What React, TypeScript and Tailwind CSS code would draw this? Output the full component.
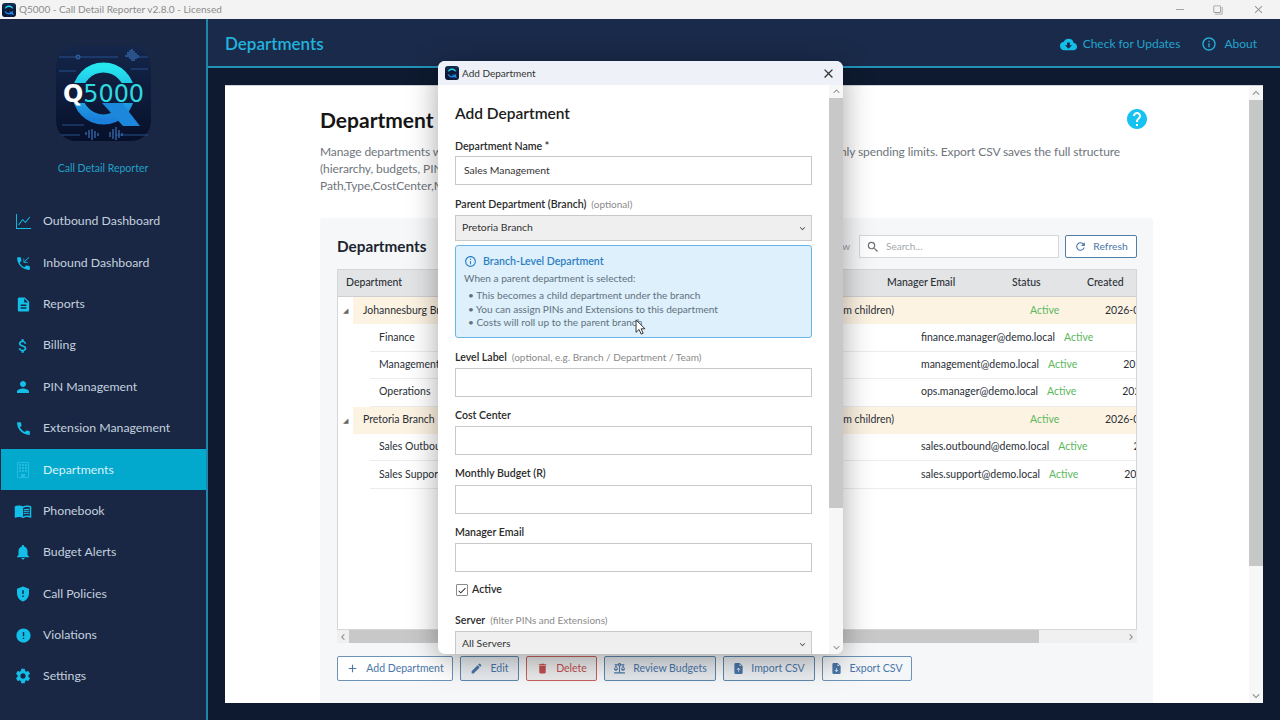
import { ReactNode } from "react";
import {
  MdAdd,
  MdAttachMoney,
  MdBalance,
  MdCall,
  MdClose,
  MdCloudDownload,
  MdDelete,
  MdDescription,
  MdEdit,
  MdError,
  MdExpandLess,
  MdExpandMore,
  MdFilterNone,
  MdGppMaybe,
  MdHelp,
  MdInfoOutline,
  MdChevronLeft,
  MdChevronRight,
  MdMenuBook,
  MdNotifications,
  MdPerson,
  MdPhoneCallback,
  MdRefresh,
  MdSearch,
  MdSettings,
  MdCheck,
} from "react-icons/md";
import { BsBuilding, BsFileEarmarkArrowDownFill, BsFileEarmarkArrowUpFill, BsGraphUp } from "react-icons/bs";

const navItems = [
  { label: "Outbound Dashboard", icon: <BsGraphUp size={15} /> },
  { label: "Inbound Dashboard", icon: <MdPhoneCallback size={17} /> },
  { label: "Reports", icon: <MdDescription size={17} /> },
  { label: "Billing", icon: <MdAttachMoney size={18} /> },
  { label: "PIN Management", icon: <MdPerson size={18} /> },
  { label: "Extension Management", icon: <MdCall size={17} /> },
  { label: "Departments", icon: <BsBuilding size={16} />, active: true },
  { label: "Phonebook", icon: <MdMenuBook size={18} /> },
  { label: "Budget Alerts", icon: <MdNotifications size={18} /> },
  { label: "Call Policies", icon: <MdGppMaybe size={18} /> },
  { label: "Violations", icon: <MdError size={17} /> },
  { label: "Settings", icon: <MdSettings size={18} /> },
];

const rows = [
  { name: "Johannesburg Branch", branch: true },
  { name: "Finance", email: "finance.manager@demo.local", date: "2026-02-11" },
  { name: "Management", email: "management@demo.local", date: "2026-02-11" },
  { name: "Operations", email: "ops.manager@demo.local", date: "2026-02-11" },
  { name: "Pretoria Branch", branch: true },
  { name: "Sales Outbound", email: "sales.outbound@demo.local", date: "2026-02-11" },
  { name: "Sales Support", email: "sales.support@demo.local", date: "2026-02-11" },
];

const Logo = ({ small = false }: { small?: boolean }) => (
  <svg viewBox="0 0 95 95" className={small ? "h-[14px] w-[14px]" : "h-[95px] w-[95px]"}>
    <defs>
      <linearGradient id={small ? "ringS" : "ring"} x1="0" y1="0" x2="0" y2="1">
        <stop offset="0" stopColor="#25e6ee" />
        <stop offset="1" stopColor="#1b7fdc" />
      </linearGradient>
      <linearGradient id={small ? "tileS" : "tile"} x1="0" y1="0" x2="0" y2="1">
        <stop offset="0" stopColor="#14264a" />
        <stop offset="1" stopColor="#07102a" />
      </linearGradient>
    </defs>
    <rect width="95" height="95" rx="20" fill={`url(#${small ? "tileS" : "tile"})`} />
    <g stroke="#24508c" strokeWidth="1" fill="none">
      <path d="M3 11H62M82 11H92M3 25H20M75 23H92M6 79H28M5 89H24M60 89H92" />
      <path d="M70 11V9M72 11V6M74 13V4M76 15V3M78 15V5M80 13V7M82 12V9" stroke="#3a72b8" strokeWidth="1.2" />
      <path d="M30 89V86M33 92V84M36 94V83M39 92V85M42 90V87M54 91V86M57 93V83M60 94V81M63 92V84M66 90V87" stroke="#3a72b8" strokeWidth="1.2" />
    </g>
    <circle cx="22" cy="11" r="2" fill="none" stroke="#3a72b8" />
    <circle cx="47.5" cy="47.5" r="26" fill="none" stroke={`url(#${small ? "ringS" : "ring"})`} strokeWidth="10" />
    <path d="M46 57H66L84 80H67Z" fill="#1b88dc" />
    <rect x="3" y="37" width="89" height="20" fill="#0e1b3a" />
    {!small && (
      <text x="7" y="55.5" textLength="81" lengthAdjust="spacingAndGlyphs" fontFamily="'DejaVu Sans', sans-serif" fontSize="24" fontWeight="700">
        <tspan fill="#ffffff">Q</tspan>
        <tspan fill="#2fd9e0" fontWeight="400">5000</tspan>
      </text>
    )}
  </svg>
);

const FieldLabel = ({ label, hint }: { label: string; hint?: string }) => (
  <div className="flex h-[16px] items-center text-[10.6px] leading-none">
    <span className="font-semibold text-[#2a2a2a]">{label}</span>
    {hint && <span className="ml-[5px] text-[10px] text-[#8a8a8a]">{hint}</span>}
  </div>
);

const Field = ({ label, hint, className }: { label: string; hint?: string; className: string }) => (
  <div className={className}>
    <FieldLabel label={label} hint={hint} />
    <div className="mt-[3px] h-[29px] border border-[#c9c9c9] bg-white" />
  </div>
);

const ActionButton = ({ icon, children, className }: { icon: ReactNode; children: ReactNode; className: string }) => (
  <button className={`flex h-[25px] shrink-0 items-center justify-center gap-[7px] rounded-[2px] border text-[10.5px] ${className}`}>
    {icon}
    {children}
  </button>
);

export default function App() {
  return (
    <div className="relative flex h-[720px] w-[1280px] flex-col overflow-hidden bg-[#0d1a2f] font-['Lato',sans-serif]">
      {/* window title bar */}
      <div className="flex h-[19px] items-center justify-between bg-[#f3f3f3] pl-[2px]">
        <div className="flex items-center gap-[3px] text-[10px] text-[#8c8c8c]">
          <Logo small />
          <span>Q5000 - Call Detail Reporter v2.8.0 - Licensed</span>
        </div>
        <div className="flex items-center gap-[29px] pr-[15px] text-[#9a9a9a]">
          <div className="h-px w-[8px] bg-[#a5a5a5]" />
          <MdFilterNone size={10} className="-scale-x-100" />
          <MdClose size={13} />
        </div>
      </div>

      <div className="flex min-h-0 flex-1">
        {/* sidebar */}
        <aside className="flex w-[208px] shrink-0 flex-col border-r-2 border-[#1f86ad] bg-[#1a2744]">
          <div className="mt-[27px] flex justify-center">
            <Logo />
          </div>
          <div className="mt-[20px] text-center text-[10.5px] leading-[14px] text-[#22a0c6]">Call Detail Reporter</div>
          <nav className="mt-[26px] flex flex-col pl-px">
            {navItems.map((item) => (
              <div
                key={item.label}
                className={
                  item.active
                    ? "flex h-[41.35px] items-center bg-[#03a8cd] text-[#d9f3fa]"
                    : "flex h-[41.35px] items-center text-[#c3d1df]"
                }
              >
                <span className={item.active ? "flex w-[42px] justify-center pl-[2px] text-[#25bddf]" : "flex w-[42px] justify-center pl-[2px] text-[#12bfe8]"}>
                  {item.icon}
                </span>
                <span className="text-[12.3px]">{item.label}</span>
              </div>
            ))}
          </nav>
        </aside>

        <main className="flex min-w-0 flex-1 flex-col">
          {/* header */}
          <header className="flex h-[49px] shrink-0 items-center justify-between border-b-2 border-[#2391b8] bg-[#1a2a4a] pl-[17px] pr-[23px] pt-[3px]">
            <h1 className="text-[17px] font-semibold text-[#22b3dd]">Departments</h1>
            <div className="flex items-center text-[12px] text-[#22a5cd]">
              <MdCloudDownload size={17} className="text-[#12bfe8]" />
              <span className="ml-[6px]">Check for Updates</span>
              <MdInfoOutline size={16} className="ml-[21px] text-[#22b3dd]" />
              <span className="ml-[7px]">About</span>
            </div>
          </header>

          {/* page */}
          <div className="flex min-h-0 flex-1 p-[17px]">
            <div className="flex min-w-0 flex-1 border-t border-[#cfd4da] bg-white">
              <div className="min-w-0 flex-1 overflow-hidden pl-[95px] pr-[96px] pt-[21px]">
                <div className="flex items-center justify-between pr-[4px]">
                  <h2 className="whitespace-nowrap text-[21px] font-bold leading-[26px] text-[#151515]">Department Management</h2>
                  <MdHelp size={24} className="mb-[2px] text-[#15c2f1]" />
                </div>
                <div className="mt-[10px] w-[800px] text-[12px] leading-[17px] tracking-[-0.1px] text-[#6f757c]">
                  <div className="flex justify-between whitespace-nowrap">
                    <span>Manage departments with branches and budgets.</span>
                    <span>Assign monthly spending limits. Export CSV saves the full structure</span>
                  </div>
                  <div className="whitespace-nowrap">(hierarchy, budgets, PINs and Extensions)</div>
                  <div className="whitespace-nowrap">Path,Type,CostCenter,ManagerEmail</div>
                </div>

                {/* departments card */}
                <section className="mt-[24px] h-[600px] rounded-[3px] bg-[#f6f7f8] px-[17px] pt-[17px]">
                  <div className="flex h-[23px] items-center">
                    <h3 className="text-[15.3px] font-bold text-[#1b2430]">Departments</h3>
                    <span className="ml-auto text-[10px] text-[#9a9a9a]">Tree view</span>
                    <div className="ml-[9px] flex h-[23px] w-[200px] items-center border border-[#d5d8db] bg-white pl-[6px] text-[10px] text-[#a4a8ac]">
                      <MdSearch size={14} className="text-[#6c7177]" />
                      <span className="ml-[6px]">Search...</span>
                    </div>
                    <button className="-mr-px ml-[6px] flex h-[23px] w-[72px] items-center justify-center gap-[6px] rounded-[2px] border border-[#4f7fa8] bg-white text-[10.3px] text-[#4a76a8]">
                      <MdRefresh size={13} />
                      Refresh
                    </button>
                  </div>

                  <div className="mt-[11px] h-[361px] w-[800px] overflow-hidden border border-[#d4d6d8] bg-white text-[10.5px] text-[#2a2f36]">
                    <div className="flex h-[27px] items-center whitespace-nowrap border-b border-[#cfcfcf] bg-[#e2e4e5] font-medium">
                      <span className="ml-[8px] w-[541px] shrink-0">Department</span>
                      <span className="w-[125px] shrink-0">Manager Email</span>
                      <span className="w-[75px] shrink-0">Status</span>
                      <span>Created</span>
                    </div>
                    {rows.map((row) =>
                      row.branch ? (
                        <div key={row.name} className="flex h-[27.4px] items-center whitespace-nowrap">
                          <span className="ml-[5px] w-[10px] shrink-0 text-[7px] text-[#666]">◢</span>
                          <div className="flex h-full flex-1 items-center bg-[#fdf3e3] pl-[10px]">
                            <span className="w-[200px] shrink-0">{row.name}</span>
                            <span className="w-[331px] shrink-0 text-right">Total (rolled up from children)</span>
                            <span className="ml-[136px] w-[75px] shrink-0 text-[#5cb85c]">Active</span>
                            <span>2026-02-11</span>
                          </div>
                        </div>
                      ) : (
                        <div key={row.name} className="ml-[32px] flex h-[27.4px] items-center whitespace-nowrap border-b border-[#ececec] pl-[9px]">
                          <span className="w-[542px] shrink-0">{row.name}</span>
                          <span>{row.email}</span>
                          <span className="ml-[9px] text-[#5cb85c]">Active</span>
                          <span className="ml-[46px]">{row.date}</span>
                        </div>
                      ),
                    )}
                  </div>

                  {/* horizontal scrollbar */}
                  <div className="flex h-[13px] w-[800px] items-center justify-between bg-[#f0f0f0] text-[#8a8a8a]">
                    <MdChevronLeft size={12} />
                    <div className="mr-auto h-full w-[690px] bg-[#c8c8c8]" />
                    <MdChevronRight size={12} />
                  </div>

                  <div className="mt-[13px] flex gap-[7px] text-[#4a76a8]">
                    <ActionButton icon={<MdAdd size={13} />} className="w-[116px] border-[#6b93b8] bg-white">Add Department</ActionButton>
                    <ActionButton icon={<MdEdit size={13} />} className="w-[59px] border-[#5f87ad] bg-[#e9edf1]">Edit</ActionButton>
                    <ActionButton icon={<MdDelete size={13} />} className="w-[71px] border-[#c9605f] bg-[#ececec] text-[#c0504f]">Delete</ActionButton>
                    <ActionButton icon={<MdBalance size={13} />} className="w-[112px] border-[#5f87ad] bg-[#e6eaee]">Review Budgets</ActionButton>
                    <ActionButton icon={<BsFileEarmarkArrowUpFill size={11} />} className="w-[92px] border-[#5f87ad] bg-[#eceff2]">Import CSV</ActionButton>
                    <ActionButton icon={<BsFileEarmarkArrowDownFill size={11} />} className="w-[90px] border-[#6b93b8] bg-[#f4f6f8]">Export CSV</ActionButton>
                  </div>
                </section>
              </div>

              {/* page scrollbar */}
              <div className="flex w-[14px] shrink-0 flex-col items-center bg-[#f7f7f7] text-[#8f8f8f]">
                <MdExpandLess size={14} />
                <div className="h-[466px] w-full bg-[#c6c7c7]" />
                <div className="flex-1" />
                <MdExpandMore size={14} />
              </div>
            </div>
          </div>
        </main>
      </div>

      {/* modal dialog */}
      <div className="absolute left-[438px] top-[61px] flex h-[593px] w-[405px] flex-col overflow-hidden rounded-[7px] bg-white shadow-[0_6px_30px_rgba(0,0,0,0.35)]">
        <div className="flex h-[24px] shrink-0 items-center justify-between bg-[#eef2f8] pl-[7px] pr-[7px]">
          <div className="flex items-center gap-[3px] text-[10px] text-[#333]">
            <Logo small />
            <span>Add Department</span>
          </div>
          <MdClose size={15} className="text-[#333]" />
        </div>
        <div className="flex min-h-0 flex-1">
          <div className="min-w-0 flex-1 overflow-hidden pl-[17px] pr-[17px]">
            <h2 className="mt-[17px] text-[15.5px] font-semibold leading-[22px] text-[#1c1c1c]">Add Department</h2>
            <div className="mt-[14px]">
              <FieldLabel label="Department Name *" />
              <div className="mt-[2px] flex h-[29px] items-center border border-[#c9c9c9] bg-white pl-[8px] text-[10.4px] text-[#333]">Sales Management</div>
            </div>
            <div className="mt-[11px]">
              <FieldLabel label="Parent Department (Branch)" hint="(optional)" />
              <div className="mt-[3px] flex h-[26px] items-center justify-between border border-[#c9c9c9] bg-[#efefef] pl-[6px] pr-[3px] text-[10.4px] text-[#333]">
                Pretoria Branch
                <MdExpandMore size={11} className="text-[#555]" />
              </div>
            </div>
            <div className="mt-[4px] h-[93px] rounded-[3px] border border-[#67b6e6] bg-[#ddf0fc] pl-[8px] pt-[9px] text-[10.1px] leading-[13.5px] text-[#62707c]">
              <div className="flex items-center gap-[6px] font-semibold text-[#2f7fc4]">
                <MdInfoOutline size={13} />
                <span className="text-[10.6px]">Branch-Level Department</span>
              </div>
              <div className="mt-[3px]">When a parent department is selected:</div>
              <ul className="mt-[4px] pl-[4px]">
                <li>• This becomes a child department under the branch</li>
                <li>• You can assign PINs and Extensions to this department</li>
                <li>• Costs will roll up to the parent branch</li>
              </ul>
            </div>
            <Field className="mt-[11px]" label="Level Label" hint="(optional, e.g. Branch / Department / Team)" />
            <Field className="mt-[10.4px]" label="Cost Center" />
            <Field className="mt-[10.4px]" label="Monthly Budget (R)" />
            <Field className="mt-[10.4px]" label="Manager Email" />
            <div className="mt-[11px] flex h-[14px] items-center gap-[4px] pl-px text-[10.6px] font-semibold text-[#2a2a2a]">
              <span className="flex h-[12px] w-[12px] items-center justify-center rounded-[1px] border border-[#8a8a8a] bg-white text-[#222]">
                <MdCheck size={11} />
              </span>
              Active
            </div>
            <div className="mt-[15px]">
              <FieldLabel label="Server" hint="(filter PINs and Extensions)" />
              <div className="mt-[3px] flex h-[26px] items-center justify-between border border-[#c9c9c9] bg-[#efefef] pl-[6px] pr-[3px] text-[10.4px] text-[#333]">
                All Servers
                <MdExpandMore size={11} className="text-[#555]" />
              </div>
            </div>
          </div>
          <div className="flex w-[14px] shrink-0 flex-col items-center bg-[#f7f7f7] text-[#9a9a9a]">
            <MdExpandLess size={13} />
            <div className="h-[410px] w-full bg-[#c8c8c8]" />
            <div className="flex-1" />
            <MdExpandMore size={13} />
          </div>
        </div>
      </div>

      {/* mouse pointer */}
      <svg viewBox="0 0 12 18" className="absolute left-[635px] top-[319px] h-[16px] w-[11px]">
        <path d="M1 1V15L4.4 11.8L6.8 17L9 16L6.7 11H11Z" fill="#fff" stroke="#222" strokeWidth="1" />
      </svg>
    </div>
  );
}
